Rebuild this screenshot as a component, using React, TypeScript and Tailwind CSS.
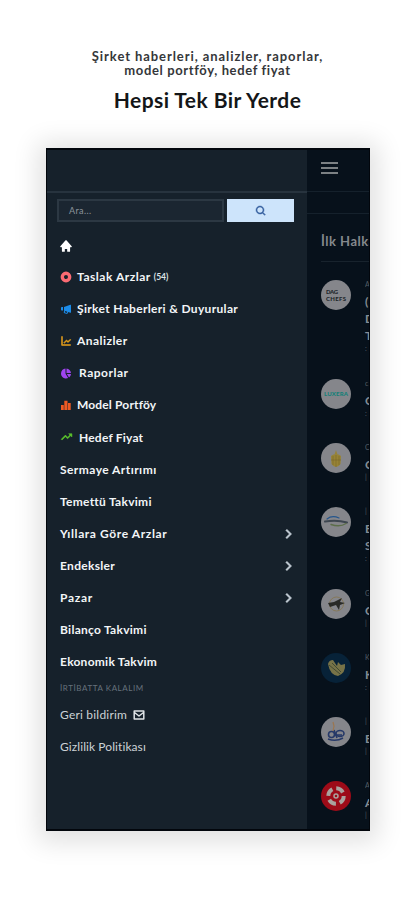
import type { ReactNode } from "react";
import {
  BiSolidHome,
  BiSolidMegaphone,
  BiLineChart,
  BiSolidPieChartAlt2,
  BiTrendingUp,
  BiSearch,
  BiChevronRight,
} from "react-icons/bi";

type Item = { label: string; tracking: string; icon?: ReactNode; count?: string; arrow?: boolean };

const Ring = () => (
  <svg viewBox="0 0 12 12" className="h-3 w-3">
    <circle cx="6" cy="6" r="3.700" fill="none" stroke="#fb6b73" strokeWidth="3.400" />
  </svg>
);

const Bars = () => (
  <svg viewBox="0 0 12 12" className="h-3 w-3" fill="#ee5a24">
    <path d="M1 6h2.800v5H1zM4.300 1.800h3.200V11H4.300zM8 4h2.700v7H8z" />
  </svg>
);

const Envelope = () => (
  <svg viewBox="0 0 12 12" className="ml-[6px] h-3 w-3" fill="none" stroke="#dfe3e6" strokeWidth="1.500" strokeLinejoin="round">
    <path d="M1.200 2h9.600v8H1.200zM1.500 3.500L6 7l4.500-3.500" />
  </svg>
);

const items: Item[] = [
  { label: "Taslak Arzlar", tracking: "tracking-[0.52px]", icon: <Ring />, count: "(54)" },
  { label: "Şirket Haberleri & Duyurular", tracking: "tracking-[0.33px]", icon: <BiSolidMegaphone className="h-3 w-3 text-[#1c8ce8]" /> },
  { label: "Analizler", tracking: "tracking-[0.45px]", icon: <BiLineChart className="h-3 w-3 stroke-[#e9a11b] stroke-1 text-[#e9a11b]" /> },
  { label: "Raporlar", tracking: "tracking-[0.52px]", icon: <BiSolidPieChartAlt2 className="mr-0.5 h-[13px] w-3 text-[#a044f0]" /> },
  { label: "Model Portföy", tracking: "tracking-[0.15px]", icon: <Bars /> },
  { label: "Hedef Fiyat", tracking: "tracking-[0.2px]", icon: <BiTrendingUp className="mr-px h-[13px] w-[13px] stroke-[#5cc52c] stroke-1 text-[#5cc52c]" /> },
  { label: "Sermaye Artırımı", tracking: "tracking-[0.45px]" },
  { label: "Temettü Takvimi", tracking: "tracking-[0.27px]" },
  { label: "Yıllara Göre Arzlar", tracking: "tracking-[0.6px]", arrow: true },
  { label: "Endeksler", tracking: "tracking-[0.3px]", arrow: true },
  { label: "Pazar", tracking: "tracking-[0.7px]", arrow: true },
  { label: "Bilanço Takvimi", tracking: "tracking-[0.27px]" },
  { label: "Ekonomik Takvim", tracking: "tracking-[0.25px]" },
];

function MenuRow({ label, tracking, icon, count, arrow }: Item) {
  return (
    <li className="flex h-[32.1px] items-center pr-[9px] pl-[13px]">
      {icon && <span className="mr-[5px] flex shrink-0">{icon}</span>}
      <span className={`text-[12px] leading-none font-bold whitespace-nowrap text-[#f2f5f7] ${tracking}`}>{label}</span>
      {count && <span className="ml-[3px] text-[8.500px] font-bold text-[#dfe3e6]">{count}</span>}
      {arrow && <BiChevronRight className="ml-auto h-5 w-5 stroke-[#c0cad2] stroke-[0.5] text-[#c0cad2]" />}
    </li>
  );
}

const logos: { h: string; bg: string; art: ReactNode; lines: [string, string][] }[] = [
  {
    h: "h-[99px]",
    bg: "bg-[#85868b]",
    art: (
      <g fill="#22262b" fontFamily="Lato, sans-serif" fontWeight="900" fontSize="6">
        <text x="5" y="13.500" textLength="12">DAG</text>
        <text x="5" y="20.800" textLength="20">CHEFS</text>
      </g>
    ),
    lines: [["A", "s"], ["(", "b"], ["D", "b"], ["T", "b"], [":", "s"]],
  },
  {
    h: "h-16",
    bg: "bg-[#85868b]",
    art: <text x="3" y="17" fill="#168078" fontFamily="Lato, sans-serif" fontWeight="900" fontSize="6" textLength="24">LUXERA</text>,
    lines: [["c", "s"], ["G", "b"], [":", "s"]],
  },
  {
    h: "h-16",
    bg: "bg-[#85868b]",
    art: (
      <g fill="#978335">
        <path d="M15 7l1.300 4h-2.600z" />
        <path d="M10 13q5-4 10 0l-.5 8q-4.500 6-9 0z" />
        <path d="M12 13v9M15 12v12M18 13v9M10 17h10" stroke="#77652b" strokeWidth=".6" />
      </g>
    ),
    lines: [["C", "s"], ["G", "b"], ["|", "s"]],
  },
  {
    h: "h-[82px]",
    bg: "bg-[#85868b]",
    art: (
      <g fill="none" strokeLinecap="round">
        <path d="M6 12q5-4 12-1" stroke="#24558c" strokeWidth="1.200" />
        <path d="M4 14.500q12-2 22 1" stroke="#3d4650" strokeWidth="2" />
        <path d="M10 17.500q9 3 15-1" stroke="#5c6e4a" strokeWidth="1.400" />
      </g>
    ),
    lines: [["|", "s"], ["E", "b"], ["S", "b"], [":", "s"]],
  },
  {
    h: "h-16",
    bg: "bg-[#85868b]",
    art: (
      <g>
        <circle cx="15.500" cy="15" r="7" fill="none" stroke="#85795a" strokeWidth="1" />
        <path d="M7 14l6-1 8-4-2 4 5 1-5 2-1 5-3-5-6 2z" fill="#292a27" />
      </g>
    ),
    lines: [["G", "s"], ["G", "b"], ["|", "s"]],
  },
  {
    h: "h-16",
    bg: "bg-[#072238]",
    art: (
      <g fill="#777348">
        <path d="M7 11q1-4 5-4l4 6 1-4 3 3 4-1q1 9-7 12-8-1-10-12z" />
        <path d="M8 12l11 9M11 10l9 9" stroke="#34402f" strokeWidth=".8" />
      </g>
    ),
    lines: [["K", "s"], ["K", "b"], [":", "s"]],
  },
  {
    h: "h-16",
    bg: "bg-[#85868b]",
    art: (
      <g fill="none" stroke="#263968" strokeWidth="1.600">
        <circle cx="10.500" cy="17.500" r="3" />
        <ellipse cx="19" cy="16.500" rx="4" ry="3" />
        <path d="M13 13l3 8M7 22q8 3 15-1M14 18h7" />
        <path d="M12 5l1 4-1 5" stroke="#9b7650" strokeWidth="1.200" />
      </g>
    ),
    lines: [["|", "s"], ["E", "b"], ["|", "s"]],
  },
  {
    h: "h-12",
    bg: "bg-[#9d0b18]",
    art: (
      <g fill="none" stroke="#aaa29e">
        <circle cx="15" cy="15" r="7.700" strokeWidth="4" strokeDasharray="8.100 4" />
        <circle cx="15" cy="15" r="2" strokeWidth="1.500" />
      </g>
    ),
    lines: [["A", "s"], ["A", "b"], ["|", "s"]],
  },
];

export default function App() {
  return (
    <div className="h-[900px] w-[415px] overflow-hidden bg-white font-[Lato,sans-serif]">
      <header className="flex h-[148px] flex-col items-center pt-[49px] text-center text-[#35373a]">
        <p className="text-[13px] leading-[14px] font-bold whitespace-nowrap tracking-[0.92px]">Şirket haberleri, analizler, raporlar,</p>
        <p className="text-[13px] leading-[14px] font-bold whitespace-nowrap tracking-[0.63px]">model portföy, hedef fiyat</p>
        <h1 className="mt-[9px] text-[21px] leading-[28px] font-bold whitespace-nowrap tracking-[0.43px] text-[#141618]">Hepsi Tek Bir Yerde</h1>
      </header>

      <main className="ml-[46px] flex h-[683px] w-[324px] overflow-hidden border border-t-2 border-b-2 border-[#02060c] bg-[#07111b] shadow-[0_3px_24px_8px_rgba(0,0,0,0.12)]">
        <nav className="w-[260px] shrink-0 bg-[#16212b]">
          <div className="h-[43px] border-b-2 border-[#27333e]" />
          <div className="flex h-[37px] gap-[3px] pt-[6px] pl-[10px]">
            <div className="flex h-[23px] w-[167px] items-center border-2 border-[#2c3843] bg-[#1b2631] pl-[10px] text-[9px] tracking-[0.4px] text-[#8b949c]">Ara...</div>
            <div className="flex h-[23px] w-[67px] items-center justify-center bg-[#cde4fb]">
              <BiSearch className="h-3 w-3 stroke-[#355f9e] stroke-1 text-[#355f9e]" />
            </div>
          </div>
          <ul>
            <li className="flex h-[31px] items-center pl-[12px]">
              <BiSolidHome className="h-[14px] w-[14px] text-white" />
            </li>
            {items.map((item) => (
              <MenuRow key={item.label} {...item} />
            ))}
          </ul>
          <p className="pl-[13px] text-[8px] leading-[20px] tracking-[0.57px] text-[#66717b]">İRTİBATTA KALALIM</p>
          <div className="flex h-[33px] items-center pl-[13px] text-[12px] tracking-[0.2px] text-[#ccd2d6]">
            <span>Geri bildirim</span>
            <Envelope />
          </div>
          <div className="flex h-8 items-center pl-[13px] text-[12px] tracking-[0.08px] text-[#ccd2d6]">
            <span>Gizlilik Politikası</span>
          </div>
        </nav>

        <section className="w-[62px] overflow-hidden bg-[#07111b]">
          <div className="flex h-[42px] items-start border-b border-[#15212c] pt-[12px] pl-[14px]">
            <div className="flex w-[17px] flex-col gap-[3px]">
              <span className="h-[2px] bg-[#7c8184]" />
              <span className="h-[2px] bg-[#7c8184]" />
              <span className="h-[2px] bg-[#7c8184]" />
            </div>
          </div>
          <div className="h-[22px] border-b border-[#15212c]" />
          <h2 className="ml-[14px] flex h-[48px] items-center border-b border-[#18232d] pt-[8px] text-[13px] font-bold whitespace-nowrap tracking-[0.5px] text-[#85898d]">İlk Halka Arzlar</h2>
          <div className="pt-[18px]">
            {logos.map((logo, i) => (
              <div key={i} className={`flex pl-[14px] ${logo.h}`}>
                <div className={`h-[30px] w-[30px] shrink-0 rounded-full ${logo.bg}`}>
                  <svg viewBox="0 0 30 30" className="h-[30px] w-[30px]">{logo.art}</svg>
                </div>
                <div className="ml-[14px] flex shrink-0 flex-col text-[#858d94]">
                  {logo.lines.map(([t, size], j) => (
                    <span key={j} className={size === "b" ? "h-[17px] text-[12px] leading-[17px] font-bold" : "h-[13px] text-[7px] leading-[8px] opacity-60"}>{t}</span>
                  ))}
                </div>
              </div>
            ))}
          </div>
        </section>
      </main>
    </div>
  );
}
